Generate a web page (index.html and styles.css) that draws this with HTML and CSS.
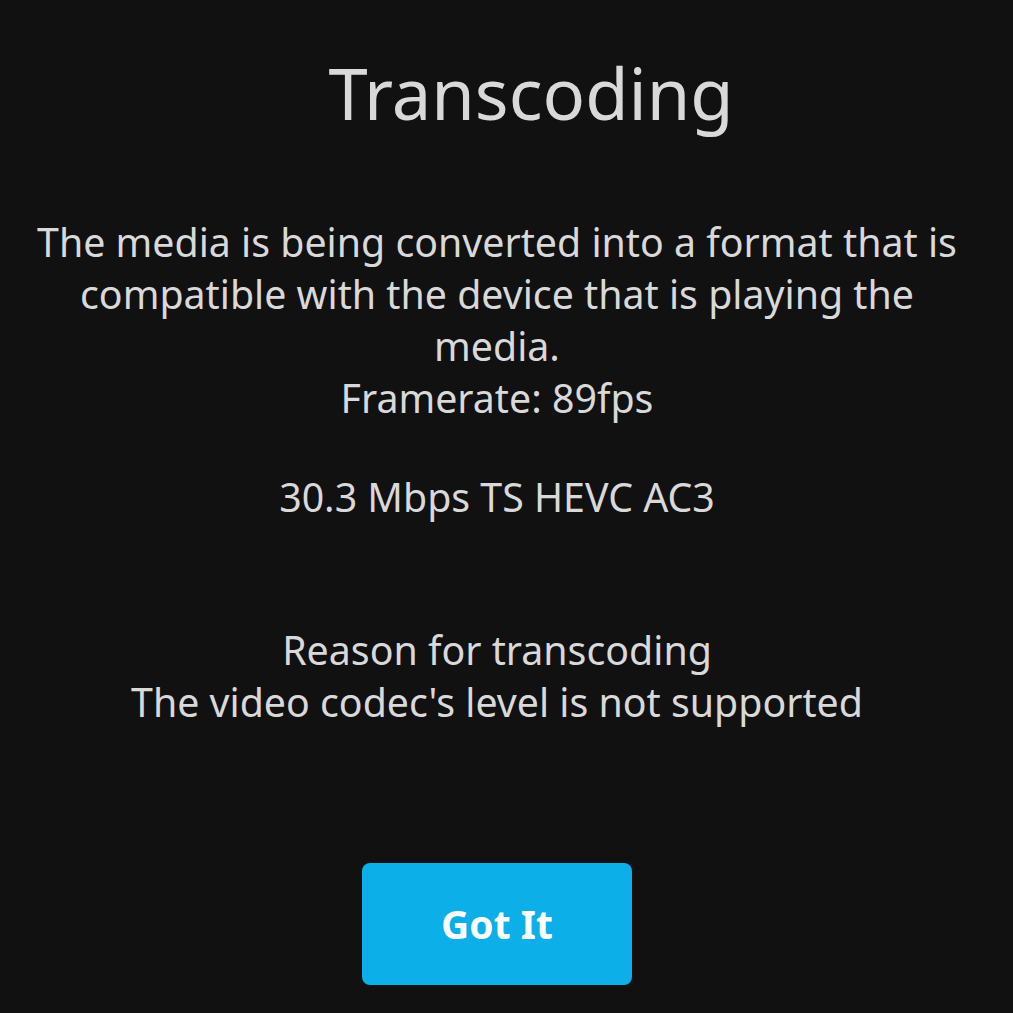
FILE: index.html
```html
<!DOCTYPE html>
<html lang="en">
<head>
    <meta charset="UTF-8">
    <meta name="viewport" content="width=device-width, initial-scale=1.0">
    <link rel="stylesheet" href="styles.css">
    <title>Transcoding</title>
</head>
<body>

    <div class="dialog">
        <h1 class="title">Transcoding</h1>

        <div class="info">
            <p>The media is being converted into a format that is compatible with the device that is playing the media.</p>
            <p>Framerate: 89fps</p>
            <p class="spacer"></p>
            <p>30.3 Mbps TS HEVC AC3</p>
            <p class="spacer double"></p>
            <p>Reason for transcoding</p>
            <p>The video codec's level is not supported</p>
        </div>

        <button class="got-it">Got It</button>
    </div>

</body>
</html>
```

FILE: styles.css
```css
html, body {
    margin: 0;
    padding: 0;
    background-color: #111111;
}

body {
    font-family: 'Noto Sans', 'Open Sans', sans-serif;
    color: #d9d9d9;
}

.dialog {
    width: 994px;
    display: flex;
    flex-direction: column;
    align-items: center;
    text-align: center;
}

.title {
    font-size: 70.5px;
    font-weight: 400;
    line-height: 1;
    margin: 58px 0 0 68px;
}

.info {
    width: 940px;
    margin-top: 87px;
    font-size: 39.3px;
    line-height: 52px;
}

.info p {
    margin: 0;
}

.spacer {
    height: 47px;
}

.spacer.double {
    height: 101px;
}

.got-it {
    margin-top: 135px;
    width: 270px;
    height: 122px;
    border: none;
    border-radius: 8px;
    background-color: #0cafe7;
    color: #ffffff;
    font-family: 'Noto Sans', 'Open Sans', sans-serif;
    font-size: 39px;
    font-weight: 700;
}
```
